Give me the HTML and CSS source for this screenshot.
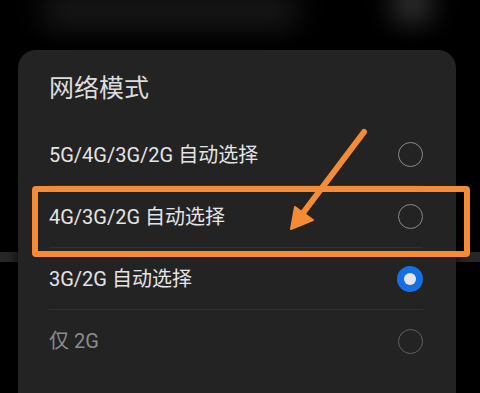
FILE: index.html
```html
<!DOCTYPE html>
<html lang="zh-CN">
<head>
    <meta charset="UTF-8">
    <meta name="viewport" content="width=device-width, initial-scale=1.0">
    <title>网络模式</title>
    <link rel="stylesheet" href="styles.css">
</head>
<body>
    <!-- Blurred page behind the dialog -->
    <div class="backdrop">
        <div class="blob blob-bar"></div>
        <div class="blob blob-dot"></div>
        <div class="back-line"></div>
    </div>

    <!-- Dialog -->
    <div class="dialog">
        <h2 class="dialog-title">网络模式</h2>
        <ul class="options">
            <li class="option">
                <span class="option-label">5G/4G/3G/2G 自动选择</span>
                <span class="radio"></span>
            </li>
            <li class="option">
                <span class="option-label">4G/3G/2G 自动选择</span>
                <span class="radio"></span>
            </li>
            <li class="option">
                <span class="option-label">3G/2G 自动选择</span>
                <span class="radio checked"></span>
            </li>
            <li class="option disabled">
                <span class="option-label">仅 2G</span>
                <span class="radio"></span>
            </li>
        </ul>
    </div>

    <!-- Annotation -->
    <div class="highlight"></div>
    <svg class="arrow" width="480" height="393" viewBox="0 0 480 393">
        <line x1="364" y1="132" x2="300" y2="217" stroke="#f58b35" stroke-width="6" stroke-linecap="round"/>
        <polygon points="291,229 295,207 313,220" fill="#f58b35" stroke="#f58b35" stroke-width="2" stroke-linejoin="round"/>
    </svg>
</body>
</html>
```

FILE: styles.css
```css
* {
    margin: 0;
    padding: 0;
    box-sizing: border-box;
}

body {
    width: 480px;
    height: 393px;
    overflow: hidden;
    position: relative;
    background-color: #000;
    font-family: 'Roboto', 'Noto Sans CJK SC', sans-serif;
    color: #e2e2e2;
}

/* Backdrop */
.backdrop {
    position: absolute;
    inset: 0;
    overflow: hidden;
}

.blob {
    position: absolute;
    filter: blur(14px);
}

.blob-bar {
    left: 40px;
    top: -10px;
    width: 260px;
    height: 40px;
    background: #161616;
    border-radius: 20px;
}

.blob-dot {
    left: 392px;
    top: -14px;
    width: 40px;
    height: 36px;
    background: #3a3a3a;
    border-radius: 50%;
}

.back-line {
    position: absolute;
    left: 0;
    top: 252px;
    width: 480px;
    height: 10px;
    background: #262626;
}

/* Dialog */
.dialog {
    position: relative;
    margin: 50px 0 0 18px;
    width: 438px;
    height: 360px;
    background-color: #232323;
    border-radius: 18px;
    padding: 0 33px 0 31px;
    box-shadow: 0 0 12px rgba(0, 0, 0, 0.8);
}

.dialog-title {
    height: 74px;
    padding-top: 23px;
    font-size: 25px;
    font-weight: 400;
    line-height: 32px;
    color: #dcdcdc;
}

.options {
    list-style: none;
}

.option {
    height: 62px;
    display: flex;
    align-items: center;
    justify-content: space-between;
    border-bottom: 1px solid #303030;
}

.option:last-child {
    border-bottom: none;
}

.option-label {
    font-size: 20px;
    line-height: 24px;
    color: #e4e4e4;
}

.option.disabled .option-label {
    color: #8c8c8c;
}

.radio {
    width: 25px;
    height: 25px;
    border-radius: 50%;
    border: 1.5px solid #8a8a8a;
    display: flex;
    align-items: center;
    justify-content: center;
}

.option.disabled .radio {
    border-color: #5e5e5e;
}

.radio.checked {
    width: 26px;
    height: 26px;
    border: none;
    background-color: #1570e2;
}

.radio.checked::after {
    content: '';
    width: 12px;
    height: 12px;
    border-radius: 50%;
    background-color: #e6e6e6;
}

/* Annotation */
.highlight {
    position: absolute;
    left: 32px;
    top: 186px;
    width: 438px;
    height: 71px;
    border: 6.5px solid #f58b35;
    border-radius: 4px;
}

.arrow {
    position: absolute;
    left: 0;
    top: 0;
}
```
